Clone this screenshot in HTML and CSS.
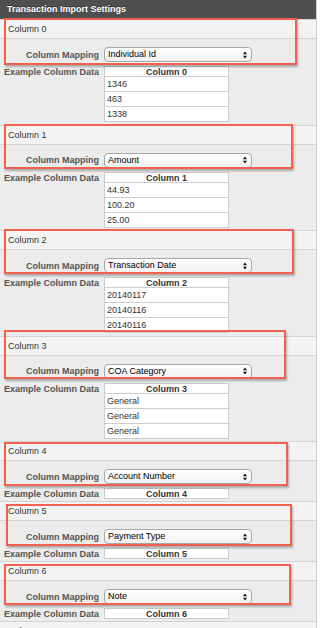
FILE: index.html
```html
<!DOCTYPE html>
<html>
<head>
<meta charset="utf-8">
<title>Transaction Import Settings</title>
<link rel="stylesheet" href="styles.css">
</head>
<body>
<div class="panel">
  <div class="title">Transaction Import Settings</div>

  <div class="section rows">
    <div class="sec-head">Column 0</div>
    <div class="field mapping">
      <div class="field-label">Column Mapping</div>
      <div class="select"><span>Individual Id</span><svg class="arrows" width="4" height="8" viewBox="0 0 4 8"><polygon points="0,3.2 2,0.4 4,3.2"/><polygon points="0,4.8 2,7.6 4,4.8"/></svg></div>
    </div>
    <div class="field example">
      <div class="field-label ex-label">Example Column Data</div>
      <div class="data">
        <div class="data-head">Column 0</div>
        <div class="data-cell">1346</div>
        <div class="data-cell">463</div>
        <div class="data-cell">1338</div>
      </div>
    </div>
  </div>

  <div class="section rows">
    <div class="sec-head">Column 1</div>
    <div class="field mapping">
      <div class="field-label">Column Mapping</div>
      <div class="select"><span>Amount</span><svg class="arrows" width="4" height="8" viewBox="0 0 4 8"><polygon points="0,3.2 2,0.4 4,3.2"/><polygon points="0,4.8 2,7.6 4,4.8"/></svg></div>
    </div>
    <div class="field example">
      <div class="field-label ex-label">Example Column Data</div>
      <div class="data">
        <div class="data-head">Column 1</div>
        <div class="data-cell">44.93</div>
        <div class="data-cell">100.20</div>
        <div class="data-cell">25.00</div>
      </div>
    </div>
  </div>

  <div class="section rows">
    <div class="sec-head">Column 2</div>
    <div class="field mapping">
      <div class="field-label">Column Mapping</div>
      <div class="select"><span>Transaction Date</span><svg class="arrows" width="4" height="8" viewBox="0 0 4 8"><polygon points="0,3.2 2,0.4 4,3.2"/><polygon points="0,4.8 2,7.6 4,4.8"/></svg></div>
    </div>
    <div class="field example">
      <div class="field-label ex-label">Example Column Data</div>
      <div class="data">
        <div class="data-head">Column 2</div>
        <div class="data-cell">20140117</div>
        <div class="data-cell">20140116</div>
        <div class="data-cell">20140116</div>
      </div>
    </div>
  </div>

  <div class="section rows">
    <div class="sec-head">Column 3</div>
    <div class="field mapping">
      <div class="field-label">Column Mapping</div>
      <div class="select"><span>COA Category</span><svg class="arrows" width="4" height="8" viewBox="0 0 4 8"><polygon points="0,3.2 2,0.4 4,3.2"/><polygon points="0,4.8 2,7.6 4,4.8"/></svg></div>
    </div>
    <div class="field example">
      <div class="field-label ex-label">Example Column Data</div>
      <div class="data">
        <div class="data-head">Column 3</div>
        <div class="data-cell">General</div>
        <div class="data-cell">General</div>
        <div class="data-cell">General</div>
      </div>
    </div>
  </div>

  <div class="section">
    <div class="sec-head">Column 4</div>
    <div class="field mapping">
      <div class="field-label">Column Mapping</div>
      <div class="select"><span>Account Number</span><svg class="arrows" width="4" height="8" viewBox="0 0 4 8"><polygon points="0,3.2 2,0.4 4,3.2"/><polygon points="0,4.8 2,7.6 4,4.8"/></svg></div>
    </div>
    <div class="field example">
      <div class="field-label ex-label">Example Column Data</div>
      <div class="data">
        <div class="data-head">Column 4</div>
      </div>
    </div>
  </div>

  <div class="section">
    <div class="sec-head">Column 5</div>
    <div class="field mapping">
      <div class="field-label">Column Mapping</div>
      <div class="select"><span>Payment Type</span><svg class="arrows" width="4" height="8" viewBox="0 0 4 8"><polygon points="0,3.2 2,0.4 4,3.2"/><polygon points="0,4.8 2,7.6 4,4.8"/></svg></div>
    </div>
    <div class="field example">
      <div class="field-label ex-label">Example Column Data</div>
      <div class="data">
        <div class="data-head">Column 5</div>
      </div>
    </div>
  </div>

  <div class="section">
    <div class="sec-head">Column 6</div>
    <div class="field mapping">
      <div class="field-label">Column Mapping</div>
      <div class="select"><span>Note</span><svg class="arrows" width="4" height="8" viewBox="0 0 4 8"><polygon points="0,3.2 2,0.4 4,3.2"/><polygon points="0,4.8 2,7.6 4,4.8"/></svg></div>
    </div>
    <div class="field example">
      <div class="field-label ex-label">Example Column Data</div>
      <div class="data">
        <div class="data-head">Column 6</div>
      </div>
    </div>
  </div>

  <div class="section">
    <div class="sec-head">Column 7</div>
  </div>

  <div class="mark m0"></div>
  <div class="mark m1"></div>
  <div class="mark m2"></div>
  <div class="mark m3"></div>
  <div class="mark m4"></div>
  <div class="mark m5"></div>
  <div class="mark m6"></div>
</div>
</body>
</html>
```

FILE: styles.css
```css
html, body {
  margin: 0;
  padding: 0;
  background: #ffffff;
}

body {
  font-family: "Liberation Sans", Arial, sans-serif;
  font-size: 9px;
  color: #222;
  overflow: hidden;
}

.panel {
  position: relative;
  width: 316px;
  border-right: 1px solid #cfcfcf;
  background: #ececec;
}

.title {
  height: 19px;
  line-height: 19px;
  padding-left: 7px;
  background: #4f4f4f;
  color: #ffffff;
  font-weight: bold;
  text-shadow: 0 -1px 0 rgba(0, 0, 0, 0.4);
}

.section {
  border-top: 1px solid #d3d3d3;
  padding-bottom: 2px;
}

.section.rows {
  padding-bottom: 2.5px;
}

.sec-head {
  height: 18px;
  line-height: 19px;
  padding-left: 8px;
  background: #f3f3f3;
  border-bottom: 1px solid #d3d3d3;
  color: #333;
}

.field {
  display: flex;
  gap: 5px;
}

.field-label {
  width: 99px;
  flex: none;
  text-align: right;
  font-weight: bold;
  color: #555;
}

.mapping {
  padding-top: 8px;
  align-items: center;
}

.select {
  width: 148px;
  height: 15px;
  box-sizing: border-box;
  border: 1px solid #a6a6a6;
  border-radius: 4px;
  background: linear-gradient(#ffffff, #f1f1f1);
  box-shadow: 0 1px 0 rgba(255, 255, 255, 0.6);
  display: flex;
  align-items: center;
  justify-content: space-between;
  padding: 0 4px 0 3px;
  color: #000;
  line-height: 13px;
}

.arrows {
  display: block;
  fill: #111;
}

.example {
  margin-top: 4px;
  align-items: flex-start;
}

.ex-label {
  line-height: 10px;
  padding-top: 1px;
}

.data {
  width: 125px;
  box-sizing: border-box;
  border: 1px solid #cccccc;
  border-bottom: none;
  background: #ffffff;
}

.data-head {
  height: 9px;
  line-height: 11px;
  border-bottom: 1px solid #cccccc;
  text-align: center;
  font-weight: bold;
  color: #333;
}

.data-cell {
  height: 14px;
  line-height: 15px;
  padding-left: 2px;
  border-bottom: 1px solid #cccccc;
  color: #333;
}

.mark {
  position: absolute;
  box-sizing: border-box;
  border: 2px solid #f2604f;
  box-shadow: 1px 2px 2px rgba(0, 0, 0, 0.28);
  pointer-events: none;
}

.m0 { left: 4px; top: 18px; width: 293px; height: 47px; }
.m1 { left: 4px; top: 124px; width: 289px; height: 45px; }
.m2 { left: 4px; top: 229px; width: 290px; height: 45px; }
.m3 { left: 4px; top: 330px; width: 282px; height: 49px; }
.m4 { left: 4px; top: 442px; width: 284px; height: 44px; }
.m5 { left: 6px; top: 504px; width: 286px; height: 42px; }
.m6 { left: 4px; top: 564px; width: 287px; height: 41px; }
```
